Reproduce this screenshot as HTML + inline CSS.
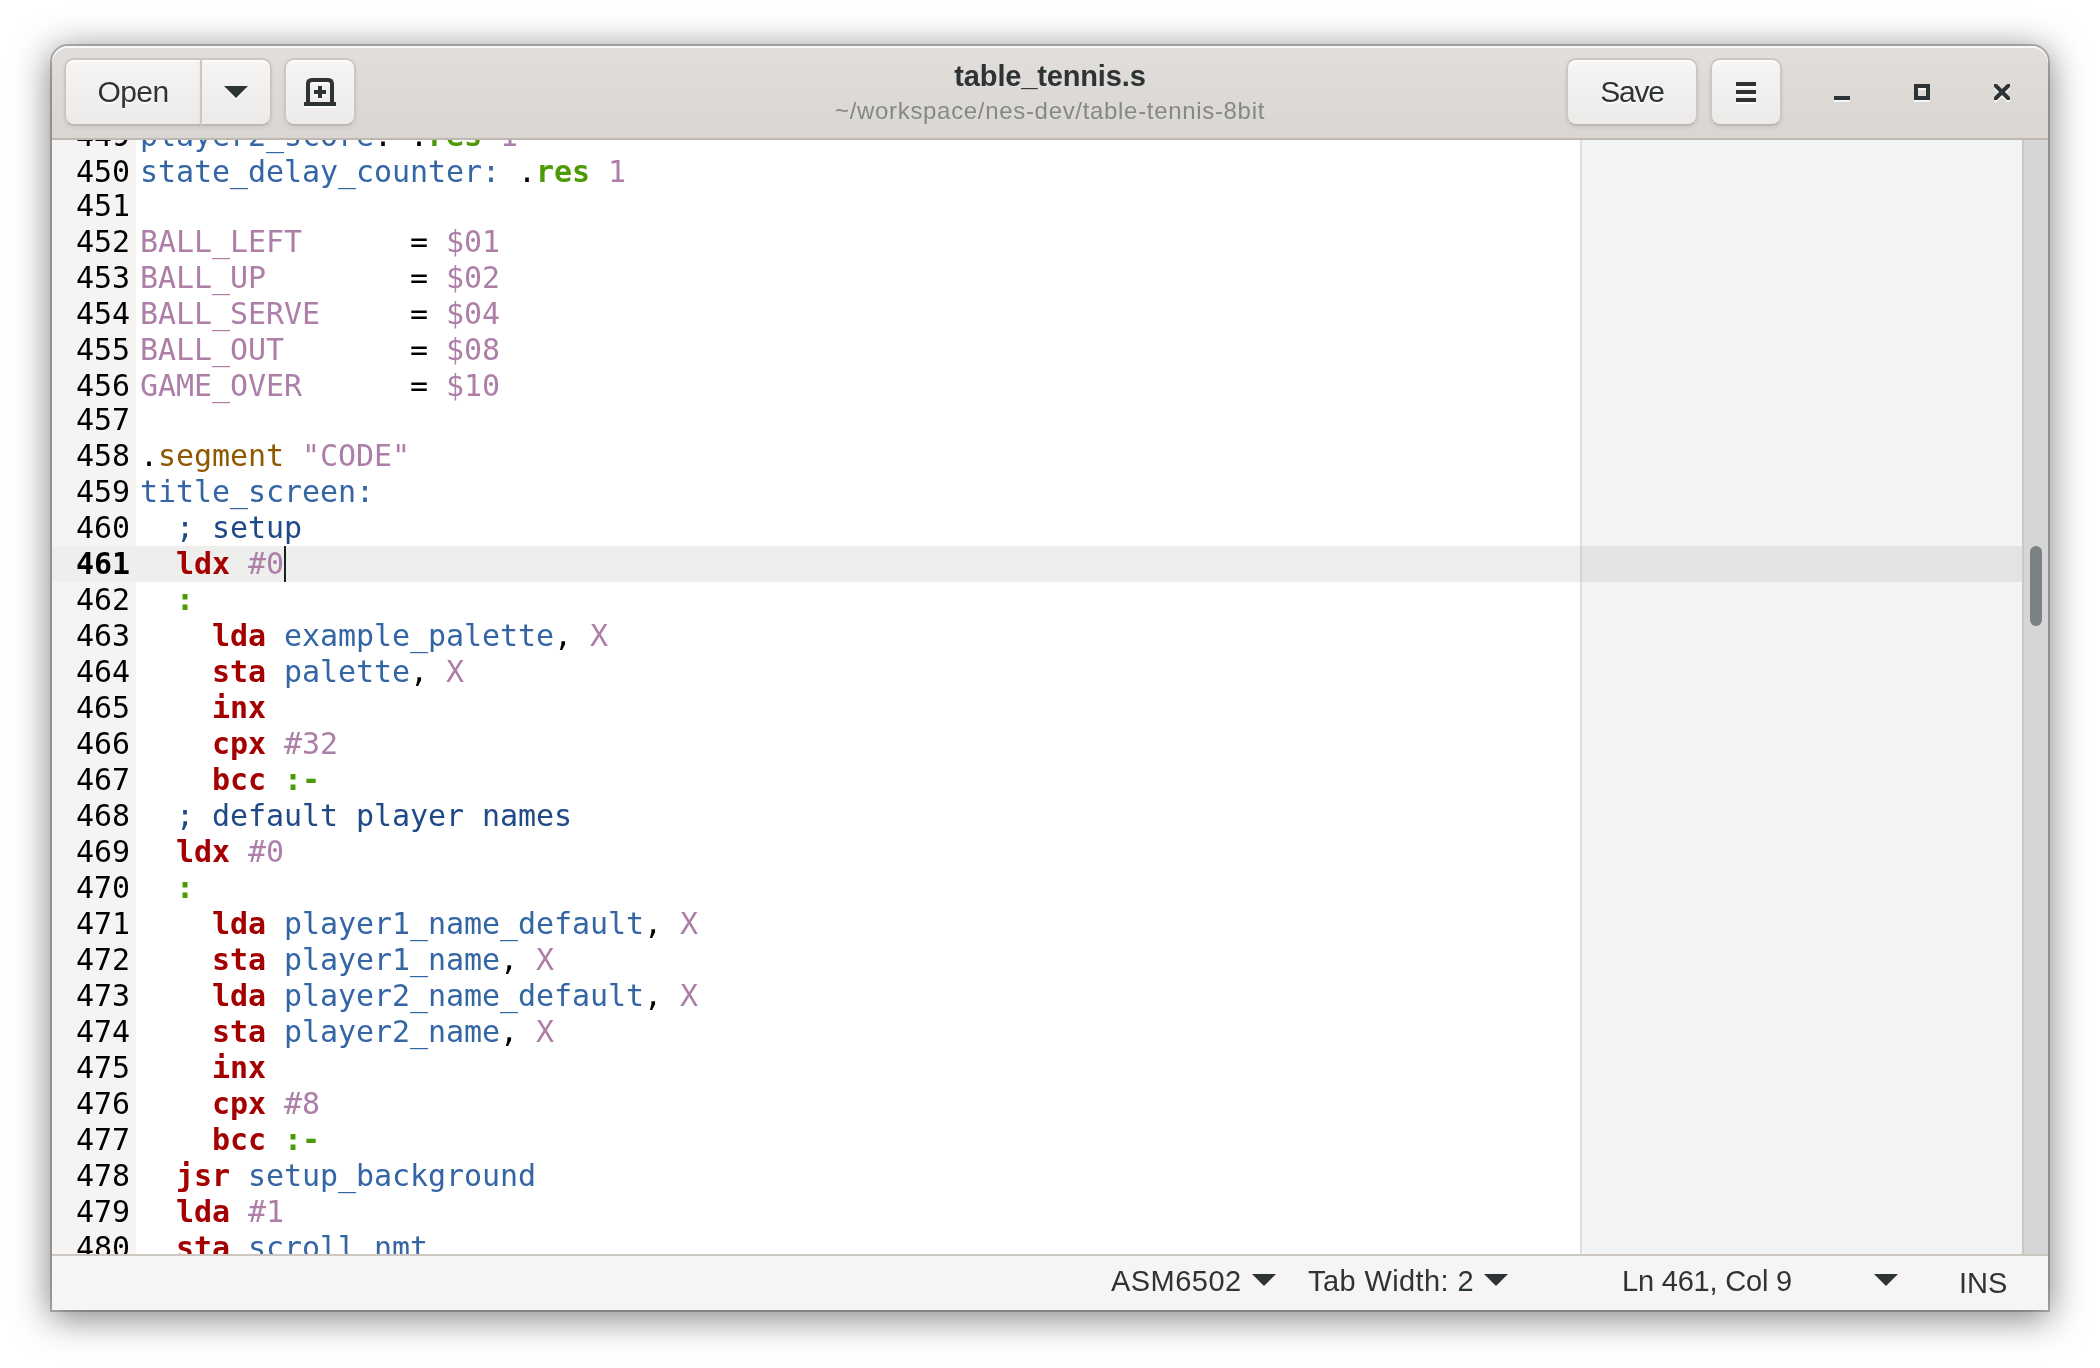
<!DOCTYPE html>
<html lang="en">
<head>
<meta charset="utf-8">
<title>table_tennis.s (~/workspace/nes-dev/table-tennis-8bit) - gedit</title>
<style>
  html, body { margin: 0; padding: 0; }
  body {
    width: 2100px; height: 1368px; overflow: hidden; background: #ffffff; position: relative;
    font-family: "Liberation Sans", "DejaVu Sans", sans-serif;
    color: #2e3436;
  }
  .ui { font-family: "Liberation Sans", "DejaVu Sans", sans-serif; }
  #win {
    position: absolute; left: 52px; top: 46px; width: 1996px; height: 1264px;
    border-radius: 16px 16px 0 0;
    box-shadow: 0 6px 36px 2px rgba(0,0,0,0.5), 0 0 0 2px rgba(0,0,0,0.23);
    background: #ffffff;
  }
  #clip { will-change: transform; position: absolute; left: 0; top: 0; width: 1996px; height: 1264px; border-radius: 16px 16px 0 0; overflow: hidden; }

  /* ---------- header bar ---------- */
  #hdr {
    position: absolute; left: 0; top: 0; width: 1996px; height: 92px;
    border-bottom: 2px solid #bfb8b1;
    background: linear-gradient(to top, #dad6d2, #e1dedb);
    box-shadow: inset 0 2px rgba(255,255,255,0.8);
    border-radius: 16px 16px 0 0;
  }
  .btn {
    position: absolute; top: 12px; height: 64px; box-sizing: content-box;
    border: 2px solid #cdc7c2; border-bottom-color: #bfb8b1; border-radius: 10px;
    background: linear-gradient(to top, #edebe9 4px, #f6f5f4);
    box-shadow: inset 0 2px rgba(255,255,255,0.8), 0 2px 4px rgba(0,0,0,0.07);
    color: #2e3436;
  }
  .btn .lbl { position: absolute; left: 0; right: 0; top: 0; height: 64px; line-height: 64px; text-align: center; font-size: 30px; white-space: nowrap; }
  .btn .lbl { text-shadow: 0 2px rgba(255,255,255,0.77); }
  .btn svg, .wc { filter: drop-shadow(0 2px 0 rgba(255,255,255,0.77)); }
  .btn svg { position: absolute; left: 50%; top: 50%; width: 32px; height: 32px; margin: -16px 0 0 -16px; }
  .wc { position: absolute; top: 30px; width: 32px; height: 32px; }
  #title { letter-spacing: -0.15px; position: absolute; left: 498px; width: 1000px; top: 10px; height: 40px; line-height: 40px; text-align: center; font-weight: bold; font-size: 29px; color: #2e3436; white-space: nowrap; }
  #subtitle { letter-spacing: 0.68px; position: absolute; left: 498px; width: 1000px; top: 49px; height: 32px; line-height: 32px; text-align: center; font-size: 24px; color: #858888; white-space: nowrap; }

  /* ---------- editor ---------- */
  #ed { position: absolute; left: 0; top: 94px; width: 1996px; height: 1114px; overflow: hidden; background: #ffffff; }
  #gutter { position: absolute; left: 0; top: 0; width: 84px; height: 1114px; background: #f5f4f2; }
  #rm { position: absolute; left: 1528px; top: 0; width: 442px; height: 1114px; background: rgba(39,66,50,0.06); border-left: 2px solid rgba(0,0,0,0.078); box-sizing: border-box; }
  #cur { position: absolute; left: 0; top: 406px; width: 1970px; height: 36px; background: #eeeeec; }
  #caret { position: absolute; left: 232px; top: 406px; width: 2px; height: 36px; background: #1b2224; }
  #vs { position: absolute; left: 1970px; top: 0; width: 24px; height: 1114px; background: #d6d6d6; border-left: 2px solid #cdc7c2; }
  #thumb { position: absolute; left: 1978px; top: 406px; width: 12px; height: 80px; border-radius: 6px; background: #7c8183; }
  .mono { font-family: "DejaVu Sans Mono", "Liberation Mono", monospace; font-size: 30px; line-height: 36px; white-space: pre; font-kerning: none; font-variant-ligatures: none; letter-spacing: -0.0615px; }
  #nums { position: absolute; left: 0; top: -22px; width: 78px; text-align: right; color: #000000; margin: 0; }
  #code { position: absolute; left: 88px; top: -22px; color: #000000; margin: 0; }
  #nums div, #code div { height: 36px; }
  #nums div.e, #code div.e { height: 34px; }
  #nums div.e { position: relative; top: -2px; }
  .k { color: #a40000; font-weight: bold; }
  .l { color: #3465a4; }
  .n { color: #ad7fa8; }
  .g { color: #4e9a06; font-weight: bold; }
  .c { color: #204a87; }
  .p { color: #8f5902; }
  .b { font-weight: bold; }

  /* ---------- status bar ---------- */
  #sb { position: absolute; left: 0; top: 1208px; width: 1996px; height: 54px; border-top: 2px solid #cdc7c2; background: #f6f5f4; }
  #sb .t { position: absolute; top: 0; height: 54px; line-height: 54px; font-size: 29px; white-space: nowrap; color: #2e3436; }
  #sb svg { position: absolute; top: 18px; width: 24px; height: 12px; }
</style>
</head>
<body>
<div id="win">
 <div id="clip">
  <div id="hdr">
   <div class="btn" style="left:12px;width:134px;border-radius:10px 0 0 10px;border-right-width:0"><div class="lbl ui" style="letter-spacing:-0.6px">Open</div></div>
   <div class="btn" style="left:148px;width:68px;border-radius:0 10px 10px 0"><svg viewBox="0 0 32 32"><path d="M4 10 L28 10 L16 22 Z" fill="#2e3436"/></svg></div>
   <div class="btn" style="left:232px;width:68px"><svg viewBox="0 0 32 32"><path d="M0 30 V26 H2 V8 Q2 2 8 2 H24 Q30 2 30 8 V26 H32 V30 Z M6 26 H26 V8 Q26 6 24 6 H8 Q6 6 6 8 Z" fill="#2e3436" fill-rule="evenodd"/><path d="M14 10 h4 v4 h4 v4 h-4 v4 h-4 v-4 h-4 v-4 h4 z" fill="#2e3436"/></svg></div>
   <div id="title" class="ui">table_tennis.s</div>
   <div id="subtitle" class="ui">~/workspace/nes-dev/table-tennis-8bit</div>
   <div class="btn" style="left:1514px;width:128px"><div class="lbl ui" style="letter-spacing:-1.2px">Save</div></div>
   <div class="btn" style="left:1658px;width:68px"><svg viewBox="0 0 32 32"><path d="M6 6 h20 v4 h-20 z M6 14 h20 v4 h-20 z M6 22 h20 v4 h-20 z" fill="#2e3436"/></svg></div>
   <svg class="wc" style="left:1774px" viewBox="0 0 32 32"><rect x="8" y="20" width="16" height="4" fill="#2e3436"/></svg>
   <svg class="wc" style="left:1854px" viewBox="0 0 32 32"><path d="M8 8 h16 v16 h-16 z M12 12 v8 h8 v-8 z" fill="#2e3436" fill-rule="evenodd"/></svg>
   <svg class="wc" style="left:1934px" viewBox="0 0 16 16"><path d="M4 4 h1 c.27 0 .52.1.72.28 L8 6.56 l2.28-2.28 c.2-.18.45-.28.72-.28 h1 v1 c0 .29-.1.55-.28.72 L9.44 8 l2.28 2.28 c.18.17.28.43.28.72 v1 h-1 c-.27 0-.55-.09-.72-.28 L8 9.44 l-2.28 2.28 c-.17.19-.45.28-.72.28 H4 v-1 c0-.29.1-.55.28-.72 L6.56 8 4.28 5.72 C4.1 5.55 4 5.29 4 5 z" fill="#2e3436"/></svg>
  </div>

  <div id="ed">
   <div id="gutter"></div>
   <div id="cur"></div>
   <div id="rm"></div>
   <div id="vs"></div>
   <div id="thumb"></div>
   <div id="nums" class="mono"><div>449</div><div>450</div><div class="e">451</div><div>452</div><div>453</div><div>454</div><div>455</div><div>456</div><div class="e">457</div><div>458</div><div>459</div><div>460</div><div class="b">461</div><div>462</div><div>463</div><div>464</div><div>465</div><div>466</div><div>467</div><div>468</div><div>469</div><div>470</div><div>471</div><div>472</div><div>473</div><div>474</div><div>475</div><div>476</div><div>477</div><div>478</div><div>479</div><div>480</div></div>
   <div id="code" class="mono"><div><span class="l">player2_score</span>: .<span class="g">res</span> <span class="n">1</span></div><div><span class="l">state_delay_counter:</span> .<span class="g">res</span> <span class="n">1</span></div><div class="e"></div><div><span class="n">BALL_LEFT</span>      = <span class="n">$01</span></div><div><span class="n">BALL_UP</span>        = <span class="n">$02</span></div><div><span class="n">BALL_SERVE</span>     = <span class="n">$04</span></div><div><span class="n">BALL_OUT</span>       = <span class="n">$08</span></div><div><span class="n">GAME_OVER</span>      = <span class="n">$10</span></div><div class="e"></div><div>.<span class="p">segment</span> <span class="n">"CODE"</span></div><div><span class="l">title_screen:</span></div><div>  <span class="c">; setup</span></div><div>  <span class="k">ldx</span> <span class="n">#0</span></div><div>  <span class="g">:</span></div><div>    <span class="k">lda</span> <span class="l">example_palette</span>, <span class="n">X</span></div><div>    <span class="k">sta</span> <span class="l">palette</span>, <span class="n">X</span></div><div>    <span class="k">inx</span></div><div>    <span class="k">cpx</span> <span class="n">#32</span></div><div>    <span class="k">bcc</span> <span class="g">:-</span></div><div>  <span class="c">; default player names</span></div><div>  <span class="k">ldx</span> <span class="n">#0</span></div><div>  <span class="g">:</span></div><div>    <span class="k">lda</span> <span class="l">player1_name_default</span>, <span class="n">X</span></div><div>    <span class="k">sta</span> <span class="l">player1_name</span>, <span class="n">X</span></div><div>    <span class="k">lda</span> <span class="l">player2_name_default</span>, <span class="n">X</span></div><div>    <span class="k">sta</span> <span class="l">player2_name</span>, <span class="n">X</span></div><div>    <span class="k">inx</span></div><div>    <span class="k">cpx</span> <span class="n">#8</span></div><div>    <span class="k">bcc</span> <span class="g">:-</span></div><div>  <span class="k">jsr</span> <span class="l">setup_background</span></div><div>  <span class="k">lda</span> <span class="n">#1</span></div><div>  <span class="k">sta</span> <span class="l">scroll_nmt</span></div></div>
   <div id="caret"></div>
  </div>

  <div id="sb">
   <div class="t ui" style="left:1059px;top:-2px;letter-spacing:0.46px">ASM6502</div>
   <svg style="left:1200px" viewBox="0 0 24 12"><path d="M0 0 L24 0 L12 12 Z" fill="#2e3436"/></svg>
   <div class="t ui" style="left:1256px;top:-2px;letter-spacing:0.4px">Tab Width: 2</div>
   <svg style="left:1432px" viewBox="0 0 24 12"><path d="M0 0 L24 0 L12 12 Z" fill="#2e3436"/></svg>
   <div class="t ui" style="left:1570px;top:-2px;letter-spacing:-0.2px">Ln 461, Col 9</div>
   <svg style="left:1822px" viewBox="0 0 24 12"><path d="M0 0 L24 0 L12 12 Z" fill="#2e3436"/></svg>
   <div class="t ui" style="left:1907px">INS</div>
  </div>
 </div>
</div>
</body>
</html>
